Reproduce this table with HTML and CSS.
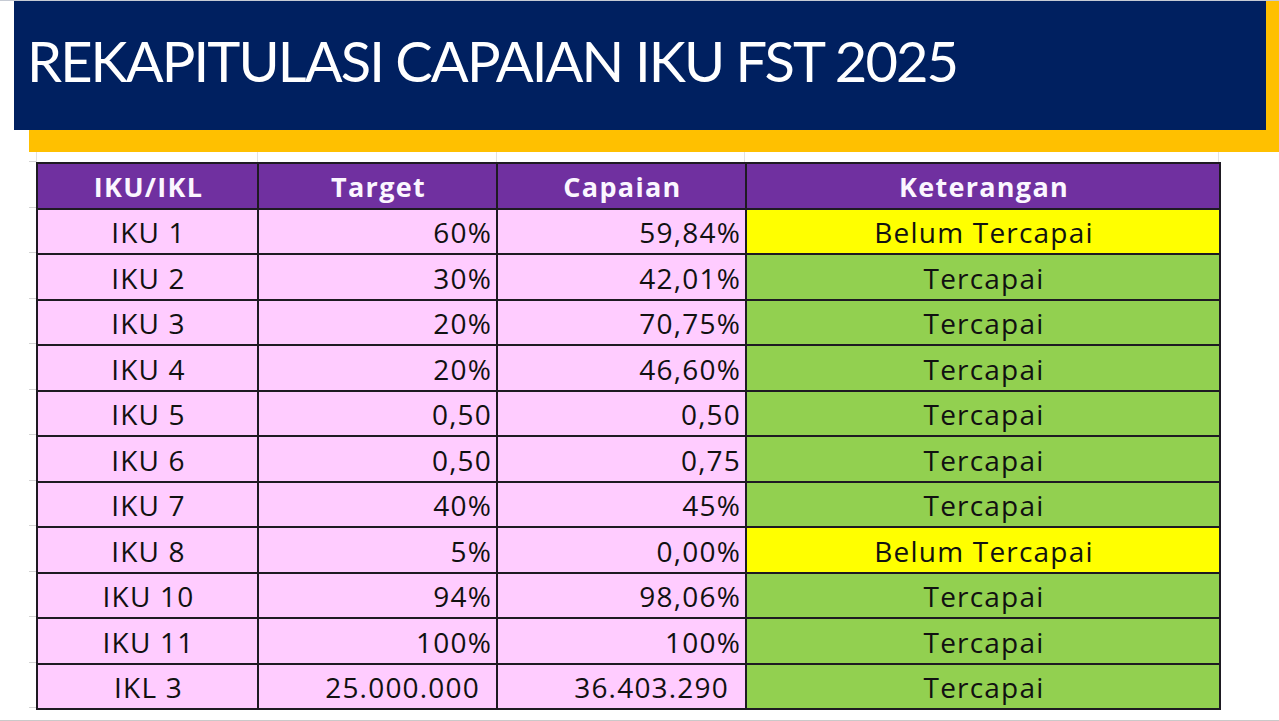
FILE: index.html
```html
<!DOCTYPE html>
<html lang="id">
<head>
<meta charset="utf-8">
<title>Rekapitulasi Capaian IKU FST 2025</title>
<link rel="stylesheet" href="styles.css">
</head>
<body>
<div class="slide">
  <div class="top-rule"></div>
  <div class="banner">
    <div class="navy">
      <h1 class="title">REKAPITULASI CAPAIAN IKU FST 2025</h1>
    </div>
  </div>
  <div class="sheet">
    <div class="gutter">
      <div class="tick tick-top"></div>
      <div class="tick"></div><div class="tick"></div><div class="tick"></div><div class="tick"></div>
      <div class="tick"></div><div class="tick"></div><div class="tick"></div><div class="tick"></div>
      <div class="tick"></div><div class="tick"></div><div class="tick"></div><div class="tick"></div>
    </div>
    <div class="grid-area">
      <div class="gridrow">
        <div class="gc c1"></div><div class="gc c2"></div><div class="gc c3"></div><div class="gc c4"></div>
      </div>
      <table class="rekap">
        <colgroup>
          <col class="w1"><col class="w2"><col class="w3"><col class="w4">
        </colgroup>
        <thead>
          <tr><th>IKU/IKL</th><th>Target</th><th>Capaian</th><th>Keterangan</th></tr>
        </thead>
        <tbody>
          <tr><td class="name">IKU 1</td><td class="num">60%</td><td class="num">59,84%</td><td class="st belum">Belum Tercapai</td></tr>
          <tr><td class="name">IKU 2</td><td class="num">30%</td><td class="num">42,01%</td><td class="st ok">Tercapai</td></tr>
          <tr><td class="name">IKU 3</td><td class="num">20%</td><td class="num">70,75%</td><td class="st ok">Tercapai</td></tr>
          <tr><td class="name">IKU 4</td><td class="num">20%</td><td class="num">46,60%</td><td class="st ok">Tercapai</td></tr>
          <tr><td class="name">IKU 5</td><td class="num">0,50</td><td class="num">0,50</td><td class="st ok">Tercapai</td></tr>
          <tr><td class="name">IKU 6</td><td class="num">0,50</td><td class="num">0,75</td><td class="st ok">Tercapai</td></tr>
          <tr><td class="name">IKU 7</td><td class="num">40%</td><td class="num">45%</td><td class="st ok">Tercapai</td></tr>
          <tr><td class="name">IKU 8</td><td class="num">5%</td><td class="num">0,00%</td><td class="st belum">Belum Tercapai</td></tr>
          <tr><td class="name">IKU 10</td><td class="num">94%</td><td class="num">98,06%</td><td class="st ok">Tercapai</td></tr>
          <tr><td class="name">IKU 11</td><td class="num">100%</td><td class="num">100%</td><td class="st ok">Tercapai</td></tr>
          <tr><td class="name">IKL 3</td><td class="num mid">25.000.000</td><td class="num mid">36.403.290</td><td class="st ok">Tercapai</td></tr>
        </tbody>
      </table>
    </div>
  </div>
  <div class="bottom-rule"></div>
</div>
</body>
</html>
```

FILE: styles.css
```css
* { box-sizing: border-box; }
html, body {
  margin: 0;
  padding: 0;
  background: #ffffff;
}
.slide {
  width: 1279px;
  height: 721px;
  overflow: hidden;
  background: #ffffff;
  font-family: "Open Sans", "Liberation Sans", sans-serif;
}
.top-rule {
  height: 1px;
  background: #c6cbd4;
}
.banner {
  margin-left: 29px;
  height: 151px;
  background: #ffc000;
}
.navy {
  margin-left: -15px;
  width: 1252px;
  height: 129px;
  background: #002060;
  padding: 26px 0 0 13px;
}
.title {
  margin: 0;
  color: #ffffff;
  font-family: Lato, "Open Sans", sans-serif;
  font-weight: 400;
  font-size: 56px;
  line-height: 68px;
  letter-spacing: -1.9px;
  white-space: nowrap;
}
.sheet {
  display: flex;
  height: 568px;
}
.gutter {
  width: 36px;
  padding-left: 29px;
  display: flex;
  flex-direction: column;
}
.tick {
  height: 45.5px;
  border-bottom: 1px solid #d4d4d4;
}
.tick-top {
  height: 10px;
}
.grid-area {
  width: 1183px;
  display: flex;
  flex-direction: column;
}
.gridrow {
  height: 10px;
  display: flex;
  border-left: 1px solid #e2e2e2;
}
.gc { border-right: 1px solid #e2e2e2; }
.c1 { width: 221px; }
.c2 { width: 239px; }
.c3 { width: 249px; }
.c4 { width: 474px; }

.rekap {
  border-collapse: collapse;
  width: 1183px;
  table-layout: fixed;
  height: 546px;
  font-size: 28px;
  letter-spacing: 1.2px;
  color: #111111;
}
.w1 { width: 221px; }
.w2 { width: 239px; }
.w3 { width: 249px; }
.w4 { width: 474px; }
.rekap th, .rekap td {
  border: 2px solid #1e1a22;
  height: 45.5px;
  padding: 2px 4px 0 6px;
  line-height: 1;
  white-space: nowrap;
}
.rekap th {
  background: #7030a0;
  color: #fbf6ff;
  font-weight: 700;
  font-size: 27px;
  letter-spacing: 1.3px;
  text-align: center;
}
.rekap td { background: #ffccff; }
.rekap td.name { text-align: center; }
.rekap td.num { text-align: right; }
.rekap td.num.mid { padding-right: 16px; }
.rekap td.st { text-align: center; }
.rekap td.ok { background: #92d050; }
.rekap td.belum { background: #ffff00; }
.bottom-rule {
  height: 1px;
  background: #c9c9c9;
}
```
